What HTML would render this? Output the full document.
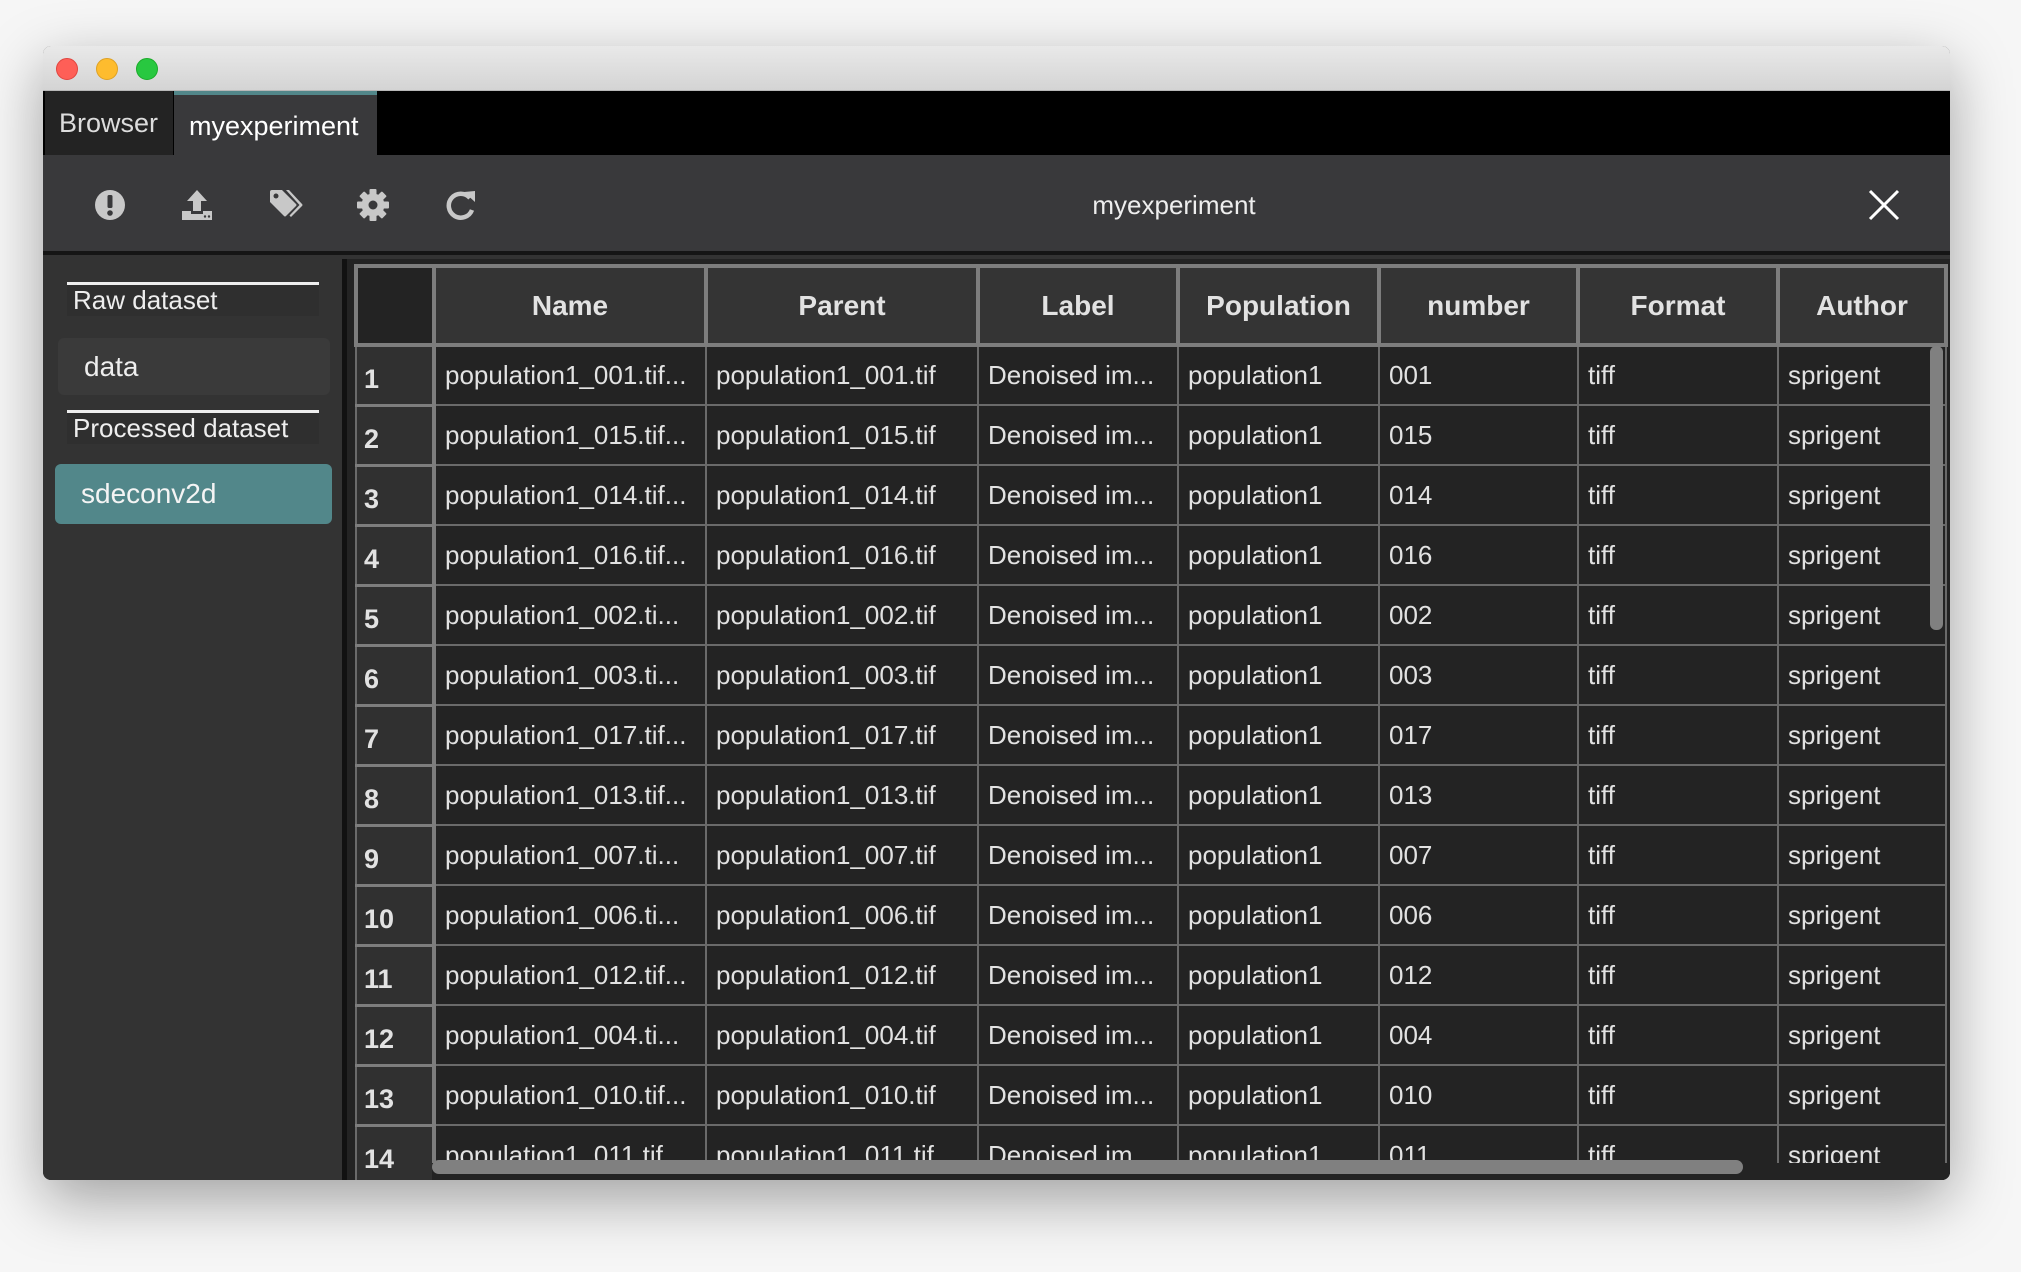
<!DOCTYPE html>
<html><head><meta charset="utf-8"><style>
*{margin:0;padding:0;box-sizing:border-box}
body{width:2021px;height:1272px;background:#f6f6f6;position:relative;overflow:hidden;font-family:"Liberation Sans",sans-serif}
.win{position:absolute;left:43px;top:46px;width:1907px;height:1134px;background:#333;border-radius:8px;overflow:hidden;box-shadow:0 20px 60px rgba(0,0,0,.35)}
.title{position:absolute;left:0;top:0;width:100%;height:45px;background:linear-gradient(#e9e9e9,#d4d4d4);border-bottom:1px solid #b8b8b8}
.dot{position:absolute;top:12px;width:22px;height:22px;border-radius:50%}
.tabs{position:absolute;left:0;top:45px;width:100%;height:64px;background:#000}
.tab{position:absolute;top:0;height:64px;color:#ddd;font-size:27px;line-height:64px}
.tool{position:absolute;left:0;top:109px;width:100%;height:100px;background:#39393b;border-bottom:4px solid #151515}
.side{position:absolute;left:0;top:213px;width:304px;bottom:0;background:#333;border-right:5px solid #111}
.hd{position:absolute;left:24px;width:252px;height:34px;background:#2f2f2f;border-top:3px solid #eee;color:#eee;font-size:26px;line-height:30px;padding-left:6px}
.item{position:absolute;left:15px;width:272px;height:57px;border-radius:6px;color:#eee;font-size:28px;line-height:57px;padding-left:26px}
.tbl{position:absolute;left:304px;top:213px;right:0;bottom:0;background:#232323}
table{position:absolute;left:7px;top:5px;border-collapse:collapse;table-layout:fixed;width:1590px}
td,th{height:60px;border:2px solid #6a6a6a;color:#e2e2e2;font-size:26px;text-align:left;padding-left:9px;white-space:nowrap;overflow:hidden}
th{height:79px;background:#343434;border:4px solid #7d7d7d;font-weight:bold;text-align:center;font-size:28px;padding:0}
td.n{background:#303030;font-weight:bold;font-size:27px;padding-left:7px;padding-top:8px;border-right:4px solid #7d7d7d;border-bottom:3px solid #7d7d7d}
</style></head><body>
<div class="win">
 <div class="title">
  <div class="dot" style="left:13px;background:#fe5f57;border:1px solid #e0443e"></div>
  <div class="dot" style="left:53px;background:#febc2e;border:1px solid #dea123"></div>
  <div class="dot" style="left:93px;background:#28c840;border:1px solid #1aab29"></div>
 </div>
 <div class="tabs">
  <div class="tab" style="left:2px;width:128px;background:#232323;padding-left:14px">Browser</div>
  <div class="tab" style="left:131px;width:203px;background:#39393b;border-top:4px solid #52878a;line-height:62px;padding-left:15px;color:#fff">myexperiment</div>
 </div>
 <div class="tool">
  <svg style="position:absolute;left:51px;top:34px" width="32" height="32" viewBox="0 0 32 32"><circle cx="16" cy="16" r="15" fill="#c8c8c8"/><rect x="13.5" y="6" width="5" height="13" rx="1.5" fill="#39393b"/><circle cx="16" cy="24" r="2.8" fill="#39393b"/></svg>
  <svg style="position:absolute;left:138px;top:34px" width="32" height="32" viewBox="0 0 32 32" fill="#c8c8c8"><path d="M16 1 L26 12 H20 V22 H12 V12 H6 Z"/><path d="M1 22 H10 V25 H22 V22 H31 V31 H1 Z"/><circle cx="24" cy="27.5" r="1.2" fill="#39393b"/><circle cx="28" cy="27.5" r="1.2" fill="#39393b"/></svg>
  <svg style="position:absolute;left:226px;top:34px" width="34" height="32" viewBox="0 0 34 32" fill="#c8c8c8"><path d="M1 3 Q1 1 3 1 H13 L27 15 Q28 16 27 17 L17 27 Q16 28 15 27 L1 13 Z"/><circle cx="7" cy="7" r="2.5" fill="#39393b"/><path d="M17 1 H20 L33 15 Q34 16 33 17 L22 28 L20.5 26.5 L30.5 16 Z"/></svg>
  <svg style="position:absolute;left:314px;top:34px" width="32" height="32" viewBox="0 0 32 32"><g fill="#c8c8c8" transform="translate(16 16)"><rect x="-3.5" y="-16" width="7" height="32" rx="1"/><rect x="-3.5" y="-16" width="7" height="32" rx="1" transform="rotate(45)"/><rect x="-3.5" y="-16" width="7" height="32" rx="1" transform="rotate(90)"/><rect x="-3.5" y="-16" width="7" height="32" rx="1" transform="rotate(135)"/><circle r="11.5"/><circle r="4.5" fill="#39393b"/></g></svg>
  <svg style="position:absolute;left:402px;top:34px" width="32" height="32" viewBox="0 0 32 32"><path d="M25 9 A12 12 0 1 0 27 21" fill="none" stroke="#c8c8c8" stroke-width="4.5"/><path d="M19 3 L30 2 L30 13 Z" fill="#c8c8c8"/></svg>
  <div style="position:absolute;left:0;width:2262px;top:2px;line-height:96px;text-align:center;color:#eee;font-size:26px">myexperiment</div>
  <svg style="position:absolute;left:1825px;top:34px" width="32" height="32" viewBox="0 0 32 32"><path d="M2 2 L30 30 M30 2 L2 30" stroke="#fff" stroke-width="3"/></svg>
 </div>
 <div class="side">
  <div class="hd" style="top:23px">Raw dataset</div>
  <div class="item" style="top:79px;background:#3a3a3a">data</div>
  <div class="hd" style="top:151px">Processed dataset</div>
  <div class="item" style="top:205px;background:#52878a;left:12px;width:277px;height:60px;line-height:60px;color:#f4f4f4">sdeconv2d</div>
 </div>
 <div class="tbl">
  <table>
   <colgroup><col style="width:78px"><col style="width:272px"><col style="width:272px"><col style="width:200px"><col style="width:201px"><col style="width:199px"><col style="width:200px"><col style="width:168px"></colgroup>
   <tr><th style="background:#232323"></th><th>Name</th><th>Parent</th><th>Label</th><th>Population</th><th>number</th><th>Format</th><th>Author</th></tr>
   <tr><td class="n">1</td><td>population1_001.tif...</td><td>population1_001.tif</td><td>Denoised im...</td><td>population1</td><td>001</td><td>tiff</td><td>sprigent</td></tr>
   <tr><td class="n">2</td><td>population1_015.tif...</td><td>population1_015.tif</td><td>Denoised im...</td><td>population1</td><td>015</td><td>tiff</td><td>sprigent</td></tr>
   <tr><td class="n">3</td><td>population1_014.tif...</td><td>population1_014.tif</td><td>Denoised im...</td><td>population1</td><td>014</td><td>tiff</td><td>sprigent</td></tr>
   <tr><td class="n">4</td><td>population1_016.tif...</td><td>population1_016.tif</td><td>Denoised im...</td><td>population1</td><td>016</td><td>tiff</td><td>sprigent</td></tr>
   <tr><td class="n">5</td><td>population1_002.ti...</td><td>population1_002.tif</td><td>Denoised im...</td><td>population1</td><td>002</td><td>tiff</td><td>sprigent</td></tr>
   <tr><td class="n">6</td><td>population1_003.ti...</td><td>population1_003.tif</td><td>Denoised im...</td><td>population1</td><td>003</td><td>tiff</td><td>sprigent</td></tr>
   <tr><td class="n">7</td><td>population1_017.tif...</td><td>population1_017.tif</td><td>Denoised im...</td><td>population1</td><td>017</td><td>tiff</td><td>sprigent</td></tr>
   <tr><td class="n">8</td><td>population1_013.tif...</td><td>population1_013.tif</td><td>Denoised im...</td><td>population1</td><td>013</td><td>tiff</td><td>sprigent</td></tr>
   <tr><td class="n">9</td><td>population1_007.ti...</td><td>population1_007.tif</td><td>Denoised im...</td><td>population1</td><td>007</td><td>tiff</td><td>sprigent</td></tr>
   <tr><td class="n">10</td><td>population1_006.ti...</td><td>population1_006.tif</td><td>Denoised im...</td><td>population1</td><td>006</td><td>tiff</td><td>sprigent</td></tr>
   <tr><td class="n">11</td><td>population1_012.tif...</td><td>population1_012.tif</td><td>Denoised im...</td><td>population1</td><td>012</td><td>tiff</td><td>sprigent</td></tr>
   <tr><td class="n">12</td><td>population1_004.ti...</td><td>population1_004.tif</td><td>Denoised im...</td><td>population1</td><td>004</td><td>tiff</td><td>sprigent</td></tr>
   <tr><td class="n">13</td><td>population1_010.tif...</td><td>population1_010.tif</td><td>Denoised im...</td><td>population1</td><td>010</td><td>tiff</td><td>sprigent</td></tr>
   <tr><td class="n">14</td><td>population1_011.tif...</td><td>population1_011.tif</td><td>Denoised im...</td><td>population1</td><td>011</td><td>tiff</td><td>sprigent</td></tr>
  </table>
  <div style="position:absolute;left:85px;right:0;top:904px;bottom:0;background:#232323"></div>
  <div style="position:absolute;left:85px;top:901px;width:1311px;height:14px;background:#808080;border-radius:7px"></div>
  <div style="position:absolute;left:1583px;top:87px;width:13px;height:284px;background:#808080;border-radius:6px"></div>
 </div>
</div>
</body></html>
